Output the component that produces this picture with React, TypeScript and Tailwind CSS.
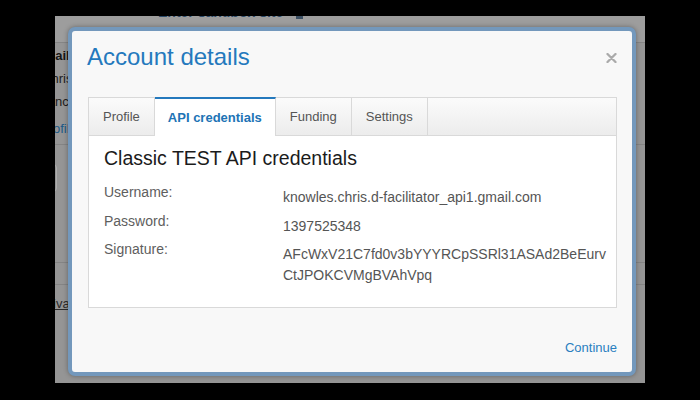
import React from "react";

function CloseIcon() {
  return (
    <svg width="11" height="10" viewBox="0 0 11 10" className="block">
      <path d="M1.5 1 L9.5 9 M9.5 1 L1.5 9" stroke="#aaaaaa" strokeWidth="2.3" strokeLinecap="round" />
    </svg>
  );
}

function Tab({ label, active }: { label: string; active?: boolean }) {
  if (active) {
    return (
      <div className="-mt-px h-[39px] bg-white border-t-2 border-t-[#2479bd] border-r border-r-[#d9d9d9] px-[13px] flex items-center text-[13px] font-bold text-[#2073b5]">
        {label}
      </div>
    );
  }
  return (
    <div className="h-[37px] border-r border-r-[#d9d9d9] px-[14px] flex items-center text-[13px] text-[#555555]">
      {label}
    </div>
  );
}

function Row({ label, children, className }: { label: string; children: React.ReactNode; className?: string }) {
  return (
    <div className={"flex " + (className ?? "")}>
      <div className="w-[179px] shrink-0 text-[14px] leading-[20px] text-[#5e5e5e]">{label}</div>
      <div className="pt-[5px] text-[14px] leading-[20.5px] text-[#555555]">{children}</div>
    </div>
  );
}

export default function App() {
  return (
    <div className="w-[700px] h-[400px] bg-black overflow-hidden pt-[16px] pl-[55px] font-['Liberation_Sans',Arial,sans-serif]">
      <div className="relative w-[590px] h-[367px] bg-[#959595] overflow-hidden">
        {/* page behind the overlay */}
        <div className="h-[27px] overflow-hidden bg-[#9d9d9d] border-b border-[#858585]">
          <div className="ml-[103px] -mt-[12px] flex items-end gap-[13px] text-[14px] leading-[16px] font-bold text-[#2b4a69]">
            <span>Enter sandbox site</span>
            <span className="w-[7px] h-[7px] bg-[#3b4f63] mb-[1px]" />
          </div>
        </div>
        <div className="text-[13px] leading-[20px]">
          <div className="mt-[3px] -ml-[20px] font-bold text-[#151515]">Email</div>
          <div className="mt-[3px] -ml-[10px] text-[#1d1d1d]">chris</div>
          <div className="mt-[3px] -ml-[26px] text-[#1d1d1d]">Balance</div>
          <div className="mt-[7px] -ml-[15px] text-[#1c5a88]">Profile</div>
          <div className="mt-[5px] border-t border-[#848484]" />
          <div className="mt-[19px] -ml-[58px] w-[60px] h-[28px] rounded-[4px] border border-[#adadad]" />
          <div className="mt-[70px] border-t border-[#848484]" />
          <div className="mt-[21px] border-t border-[#848484]" />
          <div className="mt-[9px] -ml-[15px] underline text-[#2a2a2a]">Privacy</div>
        </div>

        {/* modal */}
        <div className="absolute left-[13px] top-[11px] w-[568px] h-[349px] rounded-[7px] border-4 border-[#7398bc] bg-[#f8f8f8] shadow-[0_0_5px_rgba(0,0,0,0.35)] flex flex-col">
          <div className="flex items-start justify-between pl-[15px] pr-[15px] pt-[14px]">
            <h1 className="text-[24px] leading-[24px] text-[#2479bd]">Account details</h1>
            <button className="mt-[8px]">
              <CloseIcon />
            </button>
          </div>
          <div className="ml-[16px] mr-[15px] mt-[28px] border border-[#d9d9d9]">
            <div className="flex items-start h-[38px] border-b border-[#d9d9d9] bg-linear-to-b from-[#fbfbfb] to-[#ececec]">
              <Tab label="Profile" />
              <Tab label="API credentials" active />
              <Tab label="Funding" />
              <Tab label="Settings" />
            </div>
            <div className="h-[171px] bg-white px-[15px] pt-[10px]">
              <h2 className="text-[19.5px] leading-[24px] text-[#1b1b1b]">Classic TEST API credentials</h2>
              <Row label="Username:" className="mt-[12px]">knowles.chris.d-facilitator_api1.gmail.com</Row>
              <Row label="Password:" className="mt-[3px]">1397525348</Row>
              <Row label="Signature:" className="mt-[3px]">
                <div>AFcWxV21C7fd0v3bYYYRCpSSRl31ASAd2BeEurv</div>
                <div>CtJPOKCVMgBVAhVpq</div>
              </Row>
            </div>
          </div>
          <div className="flex justify-end mr-[15px] mt-[30px]">
            <a className="text-[13px] leading-[20px] text-[#2a7fc0]">Continue</a>
          </div>
        </div>
      </div>
    </div>
  );
}
